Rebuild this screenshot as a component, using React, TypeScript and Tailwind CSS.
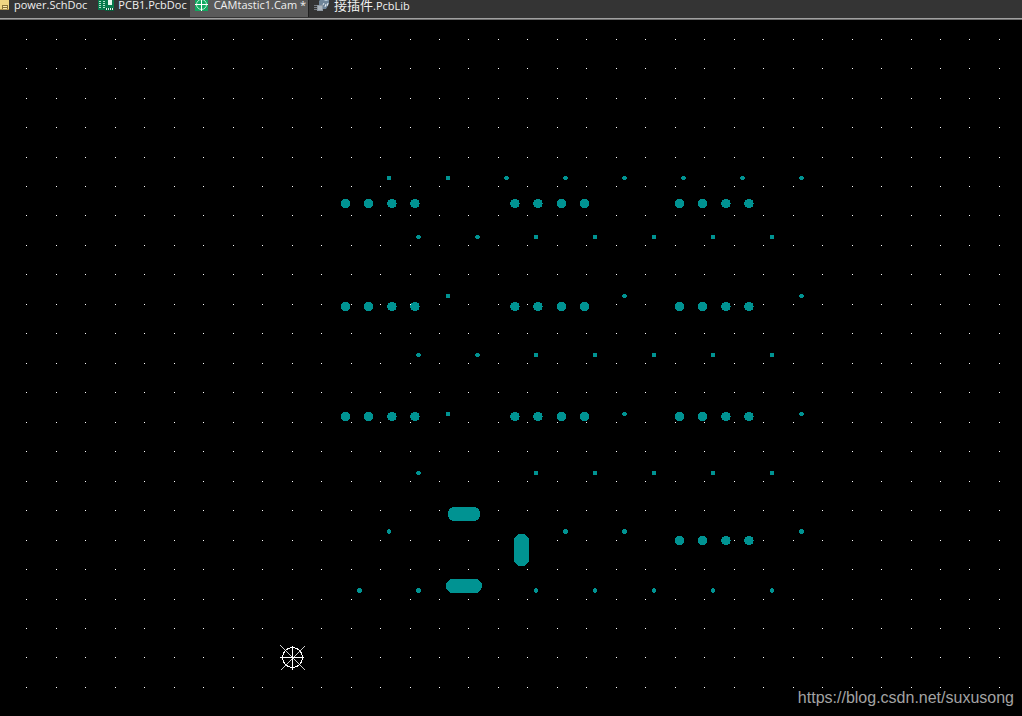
import React from "react";

const PITCH = 29.465;
const TEAL = "#009392";

const gridX = Array.from({ length: 90 }, (_, i) => Math.floor(26.93 + 29.47 * i));
const gridY = Array.from({ length: 60 }, (_, i) => Math.floor(19.18 + PITCH * i));

const viaRows: { y: number; xs: number[] }[] = [
  { y: 158, xs: [389, 448, 506.5, 565.5, 624.5, 683.5, 742.5, 801.5] },
  { y: 217, xs: [418.5, 477.5, 536, 595, 654, 713, 772] },
  { y: 276, xs: [448, 624.5, 801.5] },
  { y: 335, xs: [418.5, 477.5, 536, 595, 654, 713, 772] },
  { y: 394, xs: [448, 624.5, 801.5] },
  { y: 453, xs: [418.5, 536, 595, 654, 713, 772] },
  { y: 511.5, xs: [389, 565.5, 624.5, 801.5] },
  { y: 570.5, xs: [359.5, 418.5, 536, 595, 654, 713, 772] },
];

const left = [345.5, 368.5, 392, 415];
const middle = [515, 538, 561.5, 584.5];
const right = [679.5, 702.5, 726, 749];
const padRows: { y: number; xs: number[] }[] = [
  { y: 183.5, xs: [...left, ...middle, ...right] },
  { y: 286.5, xs: [...left, ...middle, ...right] },
  { y: 396.5, xs: [...left, ...middle, ...right] },
  { y: 520.5, xs: right },
];

function SchIcon() {
  return (
    <svg className="shrink-0" width="16" height="13" viewBox="0 3 16 13" shapeRendering="crispEdges" aria-hidden="true">
      <path d="M0 0H15V12H0Z" fill="#f0d583" />
      <path d="M8 8H14V12H8Z" fill="#8a733a" />
      <path d="M9 9H13V10H9ZM9 11H13V12H9Z" fill="#fbe9ab" />
      <path d="M0 12H15V13H0Z" fill="#b09550" />
    </svg>
  );
}

function PcbIcon() {
  return (
    <svg className="shrink-0" width="16" height="13" viewBox="0 3 16 13" shapeRendering="crispEdges" aria-hidden="true">
      <path d="M0 2H16V12H7V13H0Z" fill="#087a4c" />
      <path d="M7 11H16V14H7Z" fill="#0a5c3c" />
      <path d="M1 4H3V5H1ZM1 6H3V7H1ZM1 8H3V9H1ZM1 10H3V11H1ZM5 4H7V5H5ZM5 6H7V7H5ZM5 8H7V9H5ZM5 10H7V11H5Z" fill="#b4e3cb" />
      <path d="M10 3H14V8H10Z" fill="#e8f7ef" />
      <path d="M8 11H9V13H8ZM10 11H11V13H10ZM12 11H13V13H12ZM14 11H15V13H14Z" fill="#e2f3ea" />
    </svg>
  );
}

function CamIcon() {
  return (
    <svg className="shrink-0" width="16" height="13" viewBox="0 3 16 13" aria-hidden="true">
      <path d="M1 0H14V14H1Z" fill="#12a860" />
      <circle cx="7.5" cy="7.5" r="5" fill="none" stroke="#b5ecce" />
      <path d="M7.5 1V14M1 7.5H14" stroke="#ffffff" />
    </svg>
  );
}

function LibIcon() {
  return (
    <svg className="shrink-0" width="16" height="13" viewBox="0 3 16 13" aria-hidden="true">
      <path d="M5 4L9 0L15 3V7L12 12H9V8H5Z" fill="#6f8599" />
      <path d="M7 2L12 4L15 3L10 0Z" fill="#c3d4e2" />
      <path d="M9 8L10 6M11 10L12 7M13 9L14 6" stroke="#dfe6ec" />
      <path d="M3 8H9V14H3Z" fill="#8f99a3" />
      <path d="M4 9H8V13H4Z" fill="#abb4bc" />
      <path d="M0 8.5H3M0 10.5H3M0 12.5H3" stroke="#777d84" />
    </svg>
  );
}

const tabs = [
  { cjk: "", name: "power.SchDoc", Icon: SchIcon, active: false, box: "-ml-1.5 pr-[5px]" },
  { cjk: "", name: "PCB1.PcbDoc", Icon: PcbIcon, active: false, box: "pl-1.5 pr-[3px]" },
  { cjk: "", name: "CAMtastic1.Cam *", Icon: CamIcon, active: true, box: "pl-1 pr-0.5" },
  { cjk: "接插件", name: ".PcbLib", Icon: LibIcon, active: false, box: "pl-[5px] pr-1.5" },
];

export default function App() {
  return (
    <div className="flex h-screen flex-col overflow-hidden bg-black font-['Open_Sans','Noto_Sans_CJK_SC',sans-serif]">
      <nav className="flex h-[19px] shrink-0 border-b border-[#a0a0a0] bg-[#343434]">
        {tabs.map(({ cjk, name, Icon, active, box }) => (
          <button
            key={name}
            className={`flex h-[17px] shrink-0 items-start gap-1 text-[11px] leading-[10px] whitespace-nowrap text-[#f0f0f0] ${box} ${
              active ? "border-r border-[#202020] bg-[#5a5a5a]" : ""
            }`}
          >
            <Icon />
            <span>
              {cjk && <span className="text-[13px] leading-[10px]">{cjk}</span>}
              {name}
            </span>
          </button>
        ))}
      </nav>
      <main className="relative min-h-0 flex-1 border-t border-[#6a6a6a]">
        <svg className="block h-full w-full" shapeRendering="crispEdges" role="img" aria-label="Drill layer">
          <g fill="#ffffff">
            {gridY.map((y) => gridX.map((x) => <rect key={`${x}-${y}`} x={x} y={y} width="1" height="1" />))}
          </g>
          <g fill={TEAL}>
            {viaRows.map(({ y, xs }) => xs.map((x) => <circle key={`${x}-${y}`} cx={x} cy={y} r="2.4" />))}
            {padRows.map(({ y, xs }) => xs.map((x) => <circle key={`${x}-${y}`} cx={x} cy={y} r="4.7" />))}
            <rect x="448" y="487" width="32" height="14" rx="6" />
            <rect x="514" y="514" width="15" height="32" rx="7" />
            <rect x="446" y="559" width="36" height="14" rx="7" />
          </g>
          <g fill="none" stroke="#ffffff">
            <circle cx="292.5" cy="637.5" r="10" />
            <path d="M280 637.5H304M292.5 626V650" />
            <path d="M280 625L304.5 649.5M280 650L304.5 625.5" strokeWidth="0.8" />
          </g>
        </svg>
        <p className="absolute right-2 bottom-2 font-['Liberation_Sans',sans-serif] text-base leading-5 text-[#a3a3a3]">
          https://blog.csdn.net/suxusong
        </p>
      </main>
    </div>
  );
}
